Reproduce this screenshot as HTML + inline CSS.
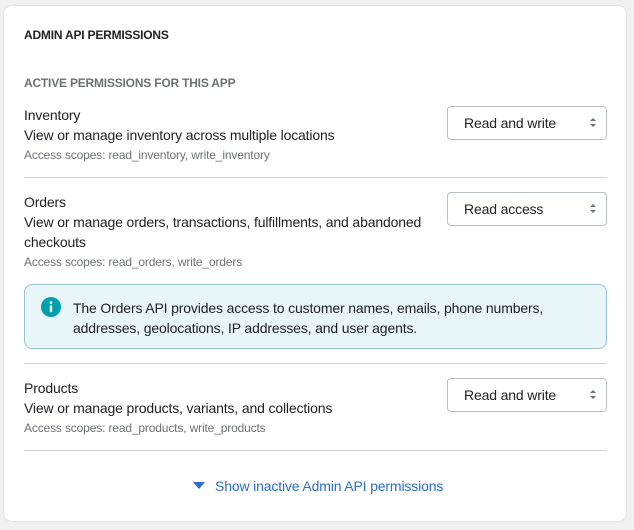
<!DOCTYPE html>
<html><head><style>
body{margin:0;width:634px;height:530px;background:#f1f1f1;font-family:"Liberation Sans",sans-serif;color:#202223;position:relative;overflow:hidden}
.card{position:absolute;left:4px;top:6px;width:622px;height:515px;background:#fff;border-radius:8px;box-shadow:0 0 2px rgba(0,0,0,.15)}
.a{position:absolute;white-space:nowrap}
.h{font-size:12px;font-weight:bold;letter-spacing:-0.2px}
.sub{font-size:12px;font-weight:bold;color:#6d7175;letter-spacing:-0.2px}
.t{font-size:14px;line-height:20px;letter-spacing:-0.15px}
.s{font-size:12px;color:#6d7175;letter-spacing:-0.15px}
.hr{position:absolute;left:24px;width:583px;height:1px;background:#d2d5d8}
.sel{position:absolute;left:447px;width:158px;height:32px;border:1px solid #babfc3;border-radius:4px;font-size:14px;line-height:32px;box-sizing:content-box;letter-spacing:-0.15px}
.sel span{position:absolute;left:16px}
.sel i{position:absolute;right:13px;top:11px;width:0;height:0}
.sel i:before{content:"";position:absolute;left:-3px;top:0;border:3px solid transparent;border-bottom:3.5px solid #6d7175;border-top:0}
.sel i:after{content:"";position:absolute;left:-3px;top:5.5px;border:3px solid transparent;border-top:3.5px solid #6d7175;border-bottom:0}
</style></head><body>
<div class="card"></div>
<div class="a h" style="left:24px;top:28px">ADMIN API PERMISSIONS</div>
<div class="a sub" style="left:24px;top:76px">ACTIVE PERMISSIONS FOR THIS APP</div>

<div class="a t" style="left:24px;top:105px">Inventory</div>
<div class="a t" style="left:24px;top:125px">View or manage inventory across multiple locations</div>
<div class="a s" style="left:24px;top:148px">Access scopes: read_inventory, write_inventory</div>
<div class="sel" style="top:106px"><span>Read and write</span><i></i></div>
<div class="hr" style="top:177px"></div>

<div class="a t" style="left:24px;top:192px">Orders</div>
<div class="a t" style="left:24px;top:212px">View or manage orders, transactions, fulfillments, and abandoned</div>
<div class="a t" style="left:24px;top:232px">checkouts</div>
<div class="a s" style="left:24px;top:255px">Access scopes: read_orders, write_orders</div>
<div class="sel" style="top:192px"><span>Read access</span><i></i></div>

<div style="position:absolute;left:24px;top:284px;width:581px;height:63px;background:#e8f6f9;border:1px solid #98c6cd;border-radius:8px"></div>
<svg class="a" style="left:41px;top:297px" width="20" height="20" viewBox="0 0 20 20"><circle cx="10" cy="10" r="10" fill="#00a0ac"/><circle cx="10" cy="5.6" r="1.4" fill="#fff"/><rect x="8.8" y="8.2" width="2.4" height="7" rx="1" fill="#fff"/></svg>
<div class="a t" style="left:73px;top:298px">The Orders API provides access to customer names, emails, phone numbers,</div>
<div class="a t" style="left:73px;top:318px">addresses, geolocations, IP addresses, and user agents.</div>
<div class="hr" style="top:363px"></div>

<div class="a t" style="left:24px;top:378px">Products</div>
<div class="a t" style="left:24px;top:398px">View or manage products, variants, and collections</div>
<div class="a s" style="left:24px;top:421px">Access scopes: read_products, write_products</div>
<div class="sel" style="top:378px"><span>Read and write</span><i></i></div>
<div class="hr" style="top:450px"></div>

<svg class="a" style="left:193px;top:482px" width="12" height="8"><path d="M0 0H12L6 7Z" fill="#2c6ecb"/></svg>
<div class="a t" style="left:215px;top:476px;color:#2c6ecb">Show inactive Admin API permissions</div>
</body></html>
